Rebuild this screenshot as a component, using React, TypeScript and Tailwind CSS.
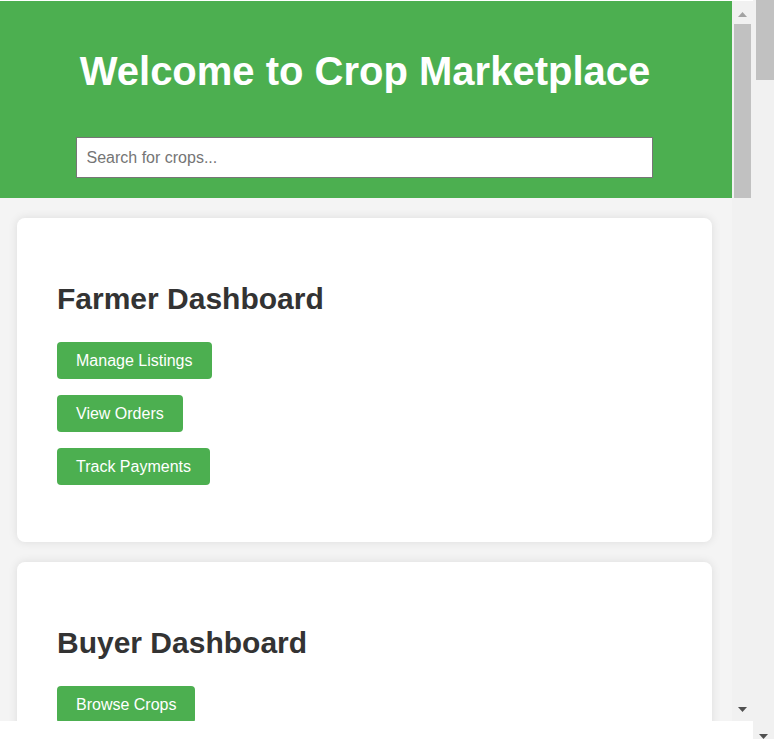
const font = { fontFamily: '"Liberation Sans", Arial, Helvetica, sans-serif' };

function Arrow({ up, color }: { up?: boolean; color: string }) {
  return (
    <svg width="9" height="5" viewBox="0 0 9 5" className="block">
      {up ? <polygon points="0,5 9,5 4.5,0" fill={color} /> : <polygon points="0,0 9,0 4.5,5" fill={color} />}
    </svg>
  );
}

function Card({ title, actions }: { title: string; actions: string[] }) {
  return (
    <section className="mt-[20px] ml-[17px] w-[695px] shrink-0 rounded-lg bg-white pl-[40px] pt-[64px] pb-[57px] shadow-[0_0_10px_rgba(0,0,0,0.1)]">
      <h2 className="text-[30px] font-bold leading-[34.5px] text-[#333]">{title}</h2>
      <div className="mt-[25.5px] flex flex-col items-start gap-[16px]">
        {actions.map((a) => (
          <button key={a} className="h-[37px] rounded-[4px] bg-[#4caf50] px-[19px] text-[16px] text-white">
            {a}
          </button>
        ))}
      </div>
    </section>
  );
}

export default function App() {
  return (
    <div className="flex h-[739px] w-[774px] overflow-hidden bg-white" style={font}>
      <div className="flex w-[753px] flex-col">
        <div className="h-[1px]" />
        <div className="flex h-[720px]">
          <main className="flex w-[732px] flex-col overflow-hidden bg-[#f4f4f4]">
            <header className="flex shrink-0 flex-col items-center bg-[#4caf50] pt-[47px] pb-[20px]">
              <h1 className="mr-[2px] text-[40px] font-bold leading-[46px] text-white">Welcome to Crop Marketplace</h1>
              <input
                type="text"
                placeholder="Search for crops..."
                className="mt-[43px] mr-[4px] h-[41px] w-[577px] border border-[#767676] bg-white px-[10px] text-[16px] text-[#333] placeholder:text-[#757575] outline-none"
              />
            </header>
            <Card title="Farmer Dashboard" actions={["Manage Listings", "View Orders", "Track Payments"]} />
            <Card title="Buyer Dashboard" actions={["Browse Crops"]} />
          </main>
          <div className="flex w-[21px] flex-col items-center bg-[#f1f1f1]">
            <div className="mt-[11px] h-[5px]">
              <Arrow up color="#a3a3a3" />
            </div>
            <div className="mt-[7px] h-[174px] w-[17px] bg-[#c1c1c1]" />
            <div className="mt-auto mb-[9px]">
              <Arrow color="#505050" />
            </div>
          </div>
        </div>
        <div className="flex-1 bg-white" />
      </div>
      <div className="flex w-[21px] flex-col items-end bg-[#f1f1f1]">
        <div className="h-[80px] w-[18px] bg-[#c1c1c1]" />
        <div className="mt-auto mr-[6px]">
          <Arrow color="#505050" />
        </div>
      </div>
    </div>
  );
}
